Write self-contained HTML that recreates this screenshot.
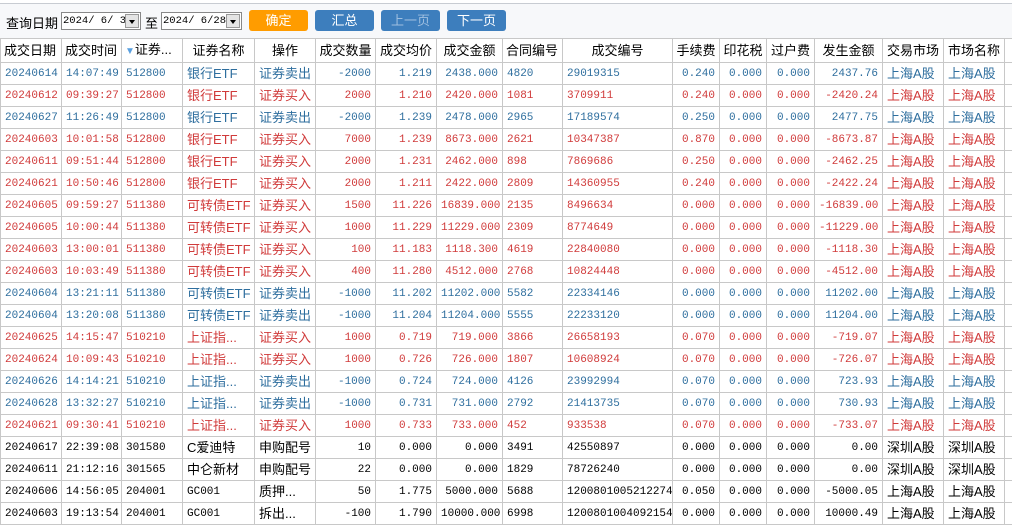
<!DOCTYPE html>
<html><head><meta charset="utf-8"><style>
*{margin:0;padding:0;box-sizing:border-box}
body{width:1012px;height:528px;overflow:hidden;background:#fff;font-family:"Liberation Sans","Noto Sans CJK SC",sans-serif;font-size:12px;position:relative}
#top{position:absolute;left:0;width:1012px;background:#f7f8fa;border-top:1px solid #c8ccd2;top:3px;height:35px}
.lbl{position:absolute;top:13px;font-size:13px;color:#000}
.sel{position:absolute;top:12px;height:18px;border:1px solid #888;background:#fff;font-family:"Liberation Mono",monospace;font-size:10.5px;line-height:16px;padding-left:1px;overflow:hidden}
.sel i{position:absolute;right:1px;top:1px;width:14px;height:14px;background:#e4e4e4;border:1px solid #999}
.sel i:after{content:"";position:absolute;left:3px;top:5px;border:3px solid transparent;border-top:4px solid #000}
.btn{position:absolute;top:10px;height:21px;width:59px;border-radius:3px;color:#fff;text-align:center;line-height:21px;font-size:13px;background:#3d7ebd}
table{position:absolute;left:0;top:38px;border-collapse:collapse;table-layout:fixed;width:1024px}
td{height:22px;line-height:20px;border:1px solid #c8c8c8;padding:0 4px;white-space:nowrap;overflow:hidden;font-family:"Liberation Mono","Noto Sans CJK SC",monospace;font-size:11px;vertical-align:middle}
tr.h td{height:24px;font-family:"Liberation Sans","Noto Sans CJK SC",sans-serif;font-size:13px;color:#000;padding:0 3px}
.r{text-align:right}.c{text-align:center}
.n{font-family:"Liberation Sans","Noto Sans CJK SC",sans-serif;font-size:13px}
tr.b td{color:#2e6e9e}tr.d td{color:#d03a3a}tr.k td{color:#000}
</style></head><body>
<div id="top"></div>
<div class="lbl" style="left:6px">查询日期</div>
<div class="sel" style="left:61px;width:80px">2024/ 6/ 3<i></i></div>
<div class="lbl" style="left:145px">至</div>
<div class="sel" style="left:161px;width:81px">2024/ 6/28<i></i></div>
<div class="btn" style="left:249px;background:#ff9c00">确定</div>
<div class="btn" style="left:315px">汇总</div>
<div class="btn" style="left:381px;color:#9fbfe0">上一页</div>
<div class="btn" style="left:447px">下一页</div>
<table>
<colgroup><col style="width:61px"><col style="width:60px"><col style="width:61px"><col style="width:72px"><col style="width:61px"><col style="width:60px"><col style="width:61px"><col style="width:66px"><col style="width:60px"><col style="width:110px"><col style="width:47px"><col style="width:47px"><col style="width:48px"><col style="width:68px"><col style="width:61px"><col style="width:61px"><col style="width:20px"></colgroup>
<tr class="h"><td>成交日期</td><td>成交时间</td><td><span style="color:#5aa0e0;font-size:10px">▼</span>证券...</td><td class="c">证券名称</td><td class="c">操作</td><td class="c">成交数量</td><td class="c">成交均价</td><td class="c">成交金额</td><td>合同编号</td><td class="c">成交编号</td><td class="c">手续费</td><td class="c">印花税</td><td class="c">过户费</td><td class="c">发生金额</td><td class="c">交易市场</td><td class="c">市场名称</td><td></td></tr>
<tr class="b"><td>20240614</td><td>14:07:49</td><td>512800</td><td class="n">银行ETF</td><td class="n">证券卖出</td><td class="r">-2000</td><td class="r">1.219</td><td class="r">2438.000</td><td>4820</td><td>29019315</td><td class="r">0.240</td><td class="r">0.000</td><td class="r">0.000</td><td class="r">2437.76</td><td class="n">上海A股</td><td class="n">上海A股</td><td></td></tr>
<tr class="d"><td>20240612</td><td>09:39:27</td><td>512800</td><td class="n">银行ETF</td><td class="n">证券买入</td><td class="r">2000</td><td class="r">1.210</td><td class="r">2420.000</td><td>1081</td><td>3709911</td><td class="r">0.240</td><td class="r">0.000</td><td class="r">0.000</td><td class="r">-2420.24</td><td class="n">上海A股</td><td class="n">上海A股</td><td></td></tr>
<tr class="b"><td>20240627</td><td>11:26:49</td><td>512800</td><td class="n">银行ETF</td><td class="n">证券卖出</td><td class="r">-2000</td><td class="r">1.239</td><td class="r">2478.000</td><td>2965</td><td>17189574</td><td class="r">0.250</td><td class="r">0.000</td><td class="r">0.000</td><td class="r">2477.75</td><td class="n">上海A股</td><td class="n">上海A股</td><td></td></tr>
<tr class="d"><td>20240603</td><td>10:01:58</td><td>512800</td><td class="n">银行ETF</td><td class="n">证券买入</td><td class="r">7000</td><td class="r">1.239</td><td class="r">8673.000</td><td>2621</td><td>10347387</td><td class="r">0.870</td><td class="r">0.000</td><td class="r">0.000</td><td class="r">-8673.87</td><td class="n">上海A股</td><td class="n">上海A股</td><td></td></tr>
<tr class="d"><td>20240611</td><td>09:51:44</td><td>512800</td><td class="n">银行ETF</td><td class="n">证券买入</td><td class="r">2000</td><td class="r">1.231</td><td class="r">2462.000</td><td>898</td><td>7869686</td><td class="r">0.250</td><td class="r">0.000</td><td class="r">0.000</td><td class="r">-2462.25</td><td class="n">上海A股</td><td class="n">上海A股</td><td></td></tr>
<tr class="d"><td>20240621</td><td>10:50:46</td><td>512800</td><td class="n">银行ETF</td><td class="n">证券买入</td><td class="r">2000</td><td class="r">1.211</td><td class="r">2422.000</td><td>2809</td><td>14360955</td><td class="r">0.240</td><td class="r">0.000</td><td class="r">0.000</td><td class="r">-2422.24</td><td class="n">上海A股</td><td class="n">上海A股</td><td></td></tr>
<tr class="d"><td>20240605</td><td>09:59:27</td><td>511380</td><td class="n">可转债ETF</td><td class="n">证券买入</td><td class="r">1500</td><td class="r">11.226</td><td class="r">16839.000</td><td>2135</td><td>8496634</td><td class="r">0.000</td><td class="r">0.000</td><td class="r">0.000</td><td class="r">-16839.00</td><td class="n">上海A股</td><td class="n">上海A股</td><td></td></tr>
<tr class="d"><td>20240605</td><td>10:00:44</td><td>511380</td><td class="n">可转债ETF</td><td class="n">证券买入</td><td class="r">1000</td><td class="r">11.229</td><td class="r">11229.000</td><td>2309</td><td>8774649</td><td class="r">0.000</td><td class="r">0.000</td><td class="r">0.000</td><td class="r">-11229.00</td><td class="n">上海A股</td><td class="n">上海A股</td><td></td></tr>
<tr class="d"><td>20240603</td><td>13:00:01</td><td>511380</td><td class="n">可转债ETF</td><td class="n">证券买入</td><td class="r">100</td><td class="r">11.183</td><td class="r">1118.300</td><td>4619</td><td>22840080</td><td class="r">0.000</td><td class="r">0.000</td><td class="r">0.000</td><td class="r">-1118.30</td><td class="n">上海A股</td><td class="n">上海A股</td><td></td></tr>
<tr class="d"><td>20240603</td><td>10:03:49</td><td>511380</td><td class="n">可转债ETF</td><td class="n">证券买入</td><td class="r">400</td><td class="r">11.280</td><td class="r">4512.000</td><td>2768</td><td>10824448</td><td class="r">0.000</td><td class="r">0.000</td><td class="r">0.000</td><td class="r">-4512.00</td><td class="n">上海A股</td><td class="n">上海A股</td><td></td></tr>
<tr class="b"><td>20240604</td><td>13:21:11</td><td>511380</td><td class="n">可转债ETF</td><td class="n">证券卖出</td><td class="r">-1000</td><td class="r">11.202</td><td class="r">11202.000</td><td>5582</td><td>22334146</td><td class="r">0.000</td><td class="r">0.000</td><td class="r">0.000</td><td class="r">11202.00</td><td class="n">上海A股</td><td class="n">上海A股</td><td></td></tr>
<tr class="b"><td>20240604</td><td>13:20:08</td><td>511380</td><td class="n">可转债ETF</td><td class="n">证券卖出</td><td class="r">-1000</td><td class="r">11.204</td><td class="r">11204.000</td><td>5555</td><td>22233120</td><td class="r">0.000</td><td class="r">0.000</td><td class="r">0.000</td><td class="r">11204.00</td><td class="n">上海A股</td><td class="n">上海A股</td><td></td></tr>
<tr class="d"><td>20240625</td><td>14:15:47</td><td>510210</td><td class="n">上证指...</td><td class="n">证券买入</td><td class="r">1000</td><td class="r">0.719</td><td class="r">719.000</td><td>3866</td><td>26658193</td><td class="r">0.070</td><td class="r">0.000</td><td class="r">0.000</td><td class="r">-719.07</td><td class="n">上海A股</td><td class="n">上海A股</td><td></td></tr>
<tr class="d"><td>20240624</td><td>10:09:43</td><td>510210</td><td class="n">上证指...</td><td class="n">证券买入</td><td class="r">1000</td><td class="r">0.726</td><td class="r">726.000</td><td>1807</td><td>10608924</td><td class="r">0.070</td><td class="r">0.000</td><td class="r">0.000</td><td class="r">-726.07</td><td class="n">上海A股</td><td class="n">上海A股</td><td></td></tr>
<tr class="b"><td>20240626</td><td>14:14:21</td><td>510210</td><td class="n">上证指...</td><td class="n">证券卖出</td><td class="r">-1000</td><td class="r">0.724</td><td class="r">724.000</td><td>4126</td><td>23992994</td><td class="r">0.070</td><td class="r">0.000</td><td class="r">0.000</td><td class="r">723.93</td><td class="n">上海A股</td><td class="n">上海A股</td><td></td></tr>
<tr class="b"><td>20240628</td><td>13:32:27</td><td>510210</td><td class="n">上证指...</td><td class="n">证券卖出</td><td class="r">-1000</td><td class="r">0.731</td><td class="r">731.000</td><td>2792</td><td>21413735</td><td class="r">0.070</td><td class="r">0.000</td><td class="r">0.000</td><td class="r">730.93</td><td class="n">上海A股</td><td class="n">上海A股</td><td></td></tr>
<tr class="d"><td>20240621</td><td>09:30:41</td><td>510210</td><td class="n">上证指...</td><td class="n">证券买入</td><td class="r">1000</td><td class="r">0.733</td><td class="r">733.000</td><td>452</td><td>933538</td><td class="r">0.070</td><td class="r">0.000</td><td class="r">0.000</td><td class="r">-733.07</td><td class="n">上海A股</td><td class="n">上海A股</td><td></td></tr>
<tr class="k"><td>20240617</td><td>22:39:08</td><td>301580</td><td class="n">C爱迪特</td><td class="n">申购配号</td><td class="r">10</td><td class="r">0.000</td><td class="r">0.000</td><td>3491</td><td>42550897</td><td class="r">0.000</td><td class="r">0.000</td><td class="r">0.000</td><td class="r">0.00</td><td class="n">深圳A股</td><td class="n">深圳A股</td><td></td></tr>
<tr class="k"><td>20240611</td><td>21:12:16</td><td>301565</td><td class="n">中仑新材</td><td class="n">申购配号</td><td class="r">22</td><td class="r">0.000</td><td class="r">0.000</td><td>1829</td><td>78726240</td><td class="r">0.000</td><td class="r">0.000</td><td class="r">0.000</td><td class="r">0.00</td><td class="n">深圳A股</td><td class="n">深圳A股</td><td></td></tr>
<tr class="k"><td>20240606</td><td>14:56:05</td><td>204001</td><td>GC001</td><td class="n">质押...</td><td class="r">50</td><td class="r">1.775</td><td class="r">5000.000</td><td>5688</td><td>1200801005212274</td><td class="r">0.050</td><td class="r">0.000</td><td class="r">0.000</td><td class="r">-5000.05</td><td class="n">上海A股</td><td class="n">上海A股</td><td></td></tr>
<tr class="k"><td>20240603</td><td>19:13:54</td><td>204001</td><td>GC001</td><td class="n">拆出...</td><td class="r">-100</td><td class="r">1.790</td><td class="r">10000.000</td><td>6998</td><td>1200801004092154</td><td class="r">0.000</td><td class="r">0.000</td><td class="r">0.000</td><td class="r">10000.49</td><td class="n">上海A股</td><td class="n">上海A股</td><td></td></tr>
</table>
</body></html>
